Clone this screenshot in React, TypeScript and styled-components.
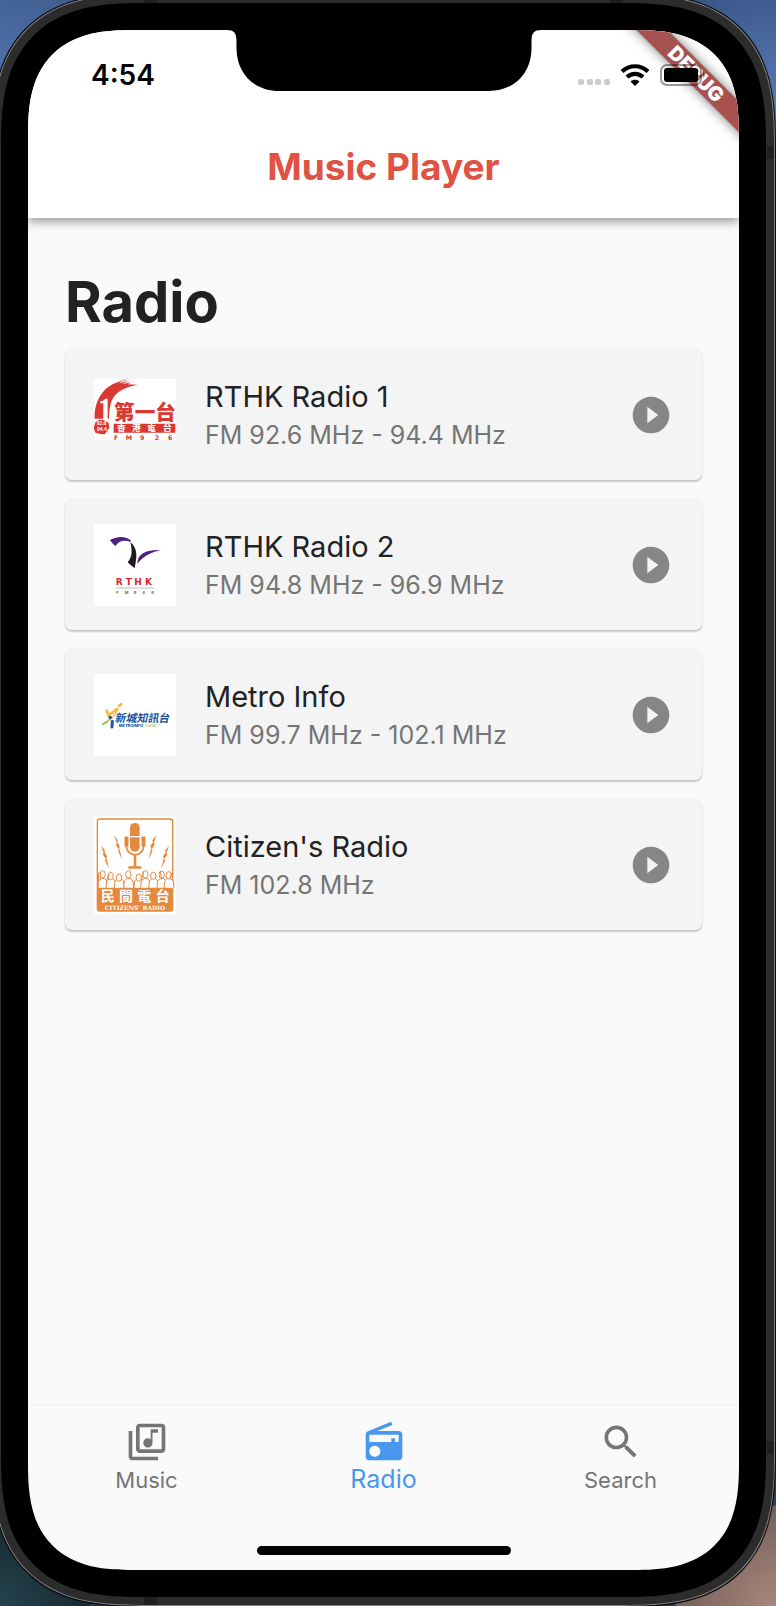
import React, { useState } from "react";
import styled, { createGlobalStyle, css } from "styled-components";

const GlobalStyle = createGlobalStyle`
  *, *::before, *::after { box-sizing: border-box; }
  body {
    margin: 0;
    font-family: Inter, "Noto Sans CJK TC", sans-serif;
    color: #222222;
  }
  button { font: inherit; border: 0; padding: 0; background: none; cursor: pointer; }
`;

const Desktop = styled.div`
  display: flex;
  min-height: 100vh;
  overflow: hidden;
  background:
    radial-gradient(circle at 0 100%, #25434e 0, #17282f 90px, transparent 91px),
    radial-gradient(circle at 100% 100%, #a8877c 0, #75605a 100px, transparent 101px),
    radial-gradient(circle at 0 100px, #5478b4 0, #3f5c8c 130px, transparent 131px),
    radial-gradient(circle at 100% 100px, #5478b4 0, #3a5484 130px, transparent 131px),
    #2b3c58;
`;

const corner = (plain: number, smooth: number) => css`
  border-radius: ${plain}px;
  @supports (corner-shape: superellipse(1.4)) {
    border-radius: ${smooth}px;
    corner-shape: superellipse(1.4);
  }
`;

const Frame = styled.div`
  position: relative;
  flex: 1;
  display: flex;
  margin: -6px 1px 0 -8px;
  padding: 7px;
  border: 1px solid #808080;
  outline: 1px solid #0c0c0c;
  background: #2c2c2c;
  ${corner(118, 150)}
`;

const Band = styled.span<{ $edge: "top" | "bottom" | "right"; $from: "start" | "end" }>`
  position: absolute;
  background: #1f1f1f;
  ${({ $edge, $from }) =>
    $edge === "right"
      ? css`right: 0; width: 7px; height: 13px; ${$from === "start" ? "top" : "bottom"}: 151px;`
      : css`${$edge}: 0; width: 13px; height: 8px; ${$from === "start" ? "left" : "right"}: 151px;`}
`;

const Bezel = styled.div`
  flex: 1;
  display: flex;
  margin: 1px;
  padding: 27px;
  background: #000000;
  ${corner(110, 141)}
`;

const Screen = styled.div`
  position: relative;
  flex: 1;
  display: flex;
  flex-direction: column;
  min-width: 0;
  overflow: hidden;
  background: #fafafa;
  ${corner(86, 106)}
`;

const Notch = styled.svg`
  position: absolute;
  top: -1px;
  left: 50%;
  width: 315px;
  height: 62px;
  transform: translateX(-50%);
  z-index: 2;
`;

const DebugBanner = styled.div`
  position: absolute;
  top: 33px;
  right: -47px;
  width: 180px;
  height: 22px;
  line-height: 22px;
  text-align: center;
  font-size: 20px;
  font-weight: 900;
  color: #ffffff;
  background: rgba(152, 54, 52, 0.86);
  box-shadow: 0 0 12px rgba(0, 0, 0, 0.5);
  transform: rotate(45deg);
  z-index: 1;
`;

const AppBar = styled.header`
  padding-bottom: 4px;
  background: #ffffff;
  box-shadow: 0 4px 9px rgba(0, 0, 0, 0.36);
`;

const StatusBar = styled.div`
  position: relative;
  z-index: 3;
  display: flex;
  align-items: center;
  justify-content: space-between;
  height: 90px;
  padding: 0 34px 0 63px;
`;

const Clock = styled.time`
  font-size: 28px;
  line-height: 32px;
  font-weight: 600;
  color: #000000;
`;

const Signals = styled.div`
  display: flex;
  gap: 10px;
`;

const AppTitle = styled.h1`
  margin: 0;
  text-align: center;
  font-size: 37px;
  line-height: 94px;
  font-weight: 700;
  color: #e05243;
`;

const Content = styled.main`
  flex: 1;
  padding: 52px 37px;
`;

const Heading = styled.h2`
  margin: 0 0 15px;
  font-size: 56px;
  line-height: 64px;
  font-weight: 700;
`;

const StationList = styled.ul`
  display: grid;
  gap: 19px;
  margin: 0;
  padding: 0;
  list-style: none;
`;

const StationCard = styled.li`
  display: flex;
  align-items: center;
  gap: 29px;
  min-height: 131px;
  padding: 0 29px;
  border-radius: 7px;
  background: #f4f4f4;
  box-shadow: 0 2px 2px rgba(0, 0, 0, 0.2), 0 0 2px rgba(0, 0, 0, 0.06);
`;

const LogoSlot = styled.div`
  display: flex;
  flex: none;
  width: 82px;
`;

const StationText = styled.div`
  flex: 1;
  min-width: 0;
  padding-top: 2px;
`;

const StationName = styled.h3`
  margin: 0;
  font-size: 29px;
  line-height: 38px;
  font-weight: 400;
`;

const Frequency = styled.p`
  margin: 0;
  font-size: 25px;
  line-height: 38px;
  color: #757575;
`;

const PlayButton = styled.button`
  display: flex;
  flex: none;
  color: #868686;
`;

const NavBar = styled.nav`
  display: grid;
  grid-template-columns: repeat(3, 1fr);
  padding-top: 14px;
  border-top: 2px solid #f3f3f3;
`;

const NavItem = styled.button<{ $active: boolean }>`
  display: grid;
  grid-template-rows: 44px 32px;
  justify-items: center;
  align-items: start;
  font-size: ${({ $active }) => ($active ? 25 : 22)}px;
  line-height: ${({ $active }) => ($active ? 30 : 32)}px;
  color: ${({ $active }) => ($active ? "#4a97f0" : "#757575")};
`;

const HomeIndicator = styled.div`
  width: 254px;
  height: 9px;
  margin: 50px auto 15px;
  border-radius: 5px;
  background: #000000;
`;

const Icon = ({ path }: { path: string }) => (
  <svg width="44" height="44" viewBox="0 0 24 24" fill="currentColor" aria-hidden="true">
    <path d={path} />
  </svg>
);

const icons = {
  play: "M12 2C6.48 2 2 6.48 2 12s4.48 10 10 10 10-4.48 10-10S17.52 2 12 2zm-2 14.5v-9l6 4.5-6 4.5z",
  music:
    "M20 2H8c-1.1 0-2 .9-2 2v12c0 1.1.9 2 2 2h12c1.1 0 2-.9 2-2V4c0-1.1-.9-2-2-2zm0 14H8V4h12v12zm-7.500-1c1.380 0 2.500-1.120 2.500-2.500V7h3V5h-4v5.510c-.42-.32-.93-.51-1.500-.51-1.380 0-2.500 1.120-2.500 2.500s1.120 2.500 2.500 2.500zM4 6H2v14c0 1.100.9 2 2 2h14v-2H4V6z",
  radio:
    "M3.240 6.150C2.510 6.430 2 7.170 2 8v12c0 1.100.89 2 2 2h16c1.110 0 2-.9 2-2V8c0-1.110-.89-2-2-2H8.300l8.260-3.340L15.880 1 3.240 6.150zM7 20c-1.660 0-3-1.340-3-3s1.340-3 3-3 3 1.340 3 3-1.340 3-3 3zm13-8h-2v-2h-2v2H4V8h16v4z",
  search:
    "M15.500 14h-.79l-.28-.27C15.410 12.590 16 11.110 16 9.500 16 5.910 13.090 3 9.500 3S3 5.910 3 9.500 5.910 16 9.500 16c1.610 0 3.090-.59 4.230-1.570l.27.28v.79l5 4.990L20.490 19l-4.990-5zm-6 0C7.010 14 5 11.990 5 9.500S7.010 5 9.500 5 14 7.010 14 9.500 11.990 14 9.500 14z",
};

const cjk = '"Noto Sans CJK TC", sans-serif';

const RadioOneLogo = () => (
  <svg width="82" height="72" viewBox="29 25 246 216" role="img" aria-label="RTHK Radio 1">
    <path fill="#fff" d="M29 25h246v183H29z" />
    <g fill="#d93833">
      <path d="M31 144C29 98 51 54 92 38l20-6-8 7 22-7-12 8 24-4-8 5 30 1c-38 8-66 20-78 48-5 14-8 31-8 54z" />
      <path opacity=".3" d="M92 36l22-10 20 0-12 5 20-2-14 7 18-1-12 5-34 0z" />
      <path d="M34 153l12-6 14 2 13 8 2 14-8 12-6 8-14-1-14-4-5-15z" />
      <path d="M88 159h185v27H88z" />
      <text x="89" y="147" fontSize="62" fontWeight="900" fontFamily={cjk}>第一台</text>
      <text x="89 124 167 211 251" y="207" fontSize="19" fontWeight="700" fontFamily="DejaVu Sans, sans-serif">FM926</text>
    </g>
    <g fill="#fff">
      <path d="M48 92c8-1 12-4 14-8h8v61h-13V98h-9z" />
      <text x="98 143 189 236" y="182" fontSize="26" fontWeight="700" fontFamily={cjk}>香港電台</text>
      <text x="37" y="164" fontSize="13" fontWeight="700">92.6</text>
      <text x="38" y="181" fontSize="13" fontWeight="700">94.4</text>
    </g>
  </svg>
);

const RadioTwoLogo = () => (
  <svg width="82" height="82" viewBox="29 24 246 246" role="img" aria-label="RTHK Radio 2">
    <path fill="#fff" d="M29 24h246v246H29z" />
    <path fill="#4c1f80" d="M77 72c19-10 42-15 62 1v5c-20-8-35-4-46 12-6-5-10-9-16-18z" />
    <path fill="#4c1f80" d="M159 143c0-29 25-42 70-41-28 7-51 17-70 41z" />
    <path fill="#211a20" d="M138 79c15 11 22 31 16 60l-3 18c-7-6-13-10-21-18 12-13 15-32 8-60z" />
    <text x="94 124 150 182" y="207" fontSize="27" fontWeight="700" fill="#d9262c" fontFamily="DejaVu Sans, sans-serif">RTHK</text>
    <path stroke="#999" strokeWidth="2" d="M96 216h113" />
    <text x="96 121 148 174 201" y="235" fontSize="12" fontWeight="600" fill="#555">FM948</text>
  </svg>
);

const MetroLogo = () => (
  <svg width="82" height="82" viewBox="29 24 246 246" role="img" aria-label="Metro Info">
    <path fill="#fff" d="M29 24h246v246H29z" />
    <g fill="none" strokeLinecap="round">
      <path stroke="#f0bd50" strokeWidth="9" d="M67 134l8 18M80 143l19-14M105 119l5-4" />
      <path stroke="#7fb955" strokeWidth="5" d="M55 175c8-3 16-9 23-17" />
      <path stroke="#f0bd50" strokeWidth="4" d="M68 166c16-8 26-20 32-34" />
      <path stroke="#20549c" strokeWidth="9" d="M84 166l-1 17" />
    </g>
    <circle cx="78" cy="154" r="5" fill="#20549c" />
    <text transform="skewX(-12)" x="126" y="168" fontSize="33" fontWeight="700" fill="#20549c" fontFamily={cjk}>新城知訊台</text>
    <text x="103" y="184" fontSize="12" fontWeight="800" fontStyle="italic" fill="#20549c">METROINFO</text>
    <text x="183" y="184" fontSize="12" fontStyle="italic" fill="#8bc16a">FM99.7</text>
  </svg>
);

const people = [
  [55, 204], [79, 209], [104, 214], [132, 204], [163, 214], [183, 204], [207, 208], [232, 205], [253, 207],
];

const CitizenLogo = () => (
  <svg width="82" height="98" viewBox="29 29 246 294" role="img" aria-label="Citizen's Radio">
    <path fill="#fff" d="M29 29h246v294H29z" />
    <rect x="39" y="38" width="226" height="276" rx="7" fill="none" stroke="#e48a3f" strokeWidth="4" />
    <g fill="#e48a3f">
      <rect x="137" y="50" width="29" height="86" rx="14" />
      <path d="M132 180h39v7h-39zM148 146h8v36h-8z" />
      <path d="M89 86l12 17-3 2 9 17-3 2 10 37-13-28 3-2-10-17 4-2zM216 86l-13 17 4 2-10 17 4 2-9 37 13-28-4-2 11-17-4-2zM51 118l12 16-3 2 9 15-3 2 8 35-13-27 4-2-10-15 3-2zM254 118l-13 16 4 2-10 15 4 2-9 35 13-27-4-2 11-15-4-2z" />
      <path d="M39 246h226v61q0 7-7 7H46q-7 0-7-7z" />
    </g>
    <path fill="none" stroke="#e48a3f" strokeWidth="5" d="M126 92v25c0 38 52 38 52 0V92M123 93h7v25h-7zM174 93h7v25h-7z" />
    <path stroke="#fff" strokeWidth="4" d="M135 91h33" />
    <g fill="#fff" stroke="#e48a3f" strokeWidth="3">
      {people.map(([x, y]) => (
        <g key={x}>
          <path d={`M${x - 14} 245l2-21 9-8h8l9 8 2 21`} />
          <ellipse cx={x} cy={y} rx="8" ry="11" />
        </g>
      ))}
      <path d="M41 244l2-45 6 3-3 22M262 199l-5 20M66 224l8-20M228 196l4 24M172 220l6-24" />
    </g>
    <path fill="#e48a3f" d="M39 244h226v5H39z" />
    <g fill="#fff">
      <text x="49 104 159 214" y="285" fontSize="42" fontWeight="700" fontFamily={cjk}>民間電台</text>
      <text x="152" y="310" textAnchor="middle" fontSize="18" fontWeight="700" fontFamily="DejaVu Serif, serif">CITIZENS’ RADIO</text>
    </g>
  </svg>
);

const stations = [
  { name: "RTHK Radio 1", frequency: "FM 92.6 MHz - 94.4 MHz", Logo: RadioOneLogo },
  { name: "RTHK Radio 2", frequency: "FM 94.8 MHz - 96.9 MHz", Logo: RadioTwoLogo },
  { name: "Metro Info", frequency: "FM 99.7 MHz - 102.1 MHz", Logo: MetroLogo },
  { name: "Citizen's Radio", frequency: "FM 102.8 MHz", Logo: CitizenLogo },
];

const tabs = [
  { label: "Music", path: icons.music },
  { label: "Radio", path: icons.radio },
  { label: "Search", path: icons.search },
];

export default function App() {
  const [tab, setTab] = useState("Radio");

  return (
    <Desktop>
      <GlobalStyle />
      <Frame>
        <Band $edge="top" $from="start" />
        <Band $edge="top" $from="end" />
        <Band $edge="bottom" $from="start" />
        <Band $edge="right" $from="start" />
        <Band $edge="right" $from="end" />
        <Bezel>
          <Screen>
            <Notch viewBox="0 0 315 62" aria-hidden="true">
              <path d="M0 0V1C8 1 10 4 10 13V19C10 44 27 62 53 62H262C288 62 305 44 305 19V13C305 4 307 1 315 1V0Z" />
            </Notch>
            <DebugBanner>DEBUG</DebugBanner>
            <AppBar>
              <StatusBar>
                <Clock>4:54</Clock>
                <Signals>
                  <svg width="32" height="22" viewBox="0 0 32 22" fill="#cccccc" aria-hidden="true">
                    <rect x="0" y="15" width="6" height="6" rx="2" />
                    <rect x="9" y="15" width="6" height="6" rx="2" />
                    <rect x="17" y="15" width="6" height="6" rx="2" />
                    <rect x="26" y="15" width="6" height="6" rx="2" />
                  </svg>
                  <svg width="30" height="22" viewBox="0 0 30 22" aria-hidden="true">
                    <g fill="none" stroke="#000" strokeWidth="4.200">
                      <path d="M2 7.500C9.500.5 20.500.5 28 7.500" />
                      <path d="M7 13C11.500 8.700 18.500 8.700 23 13" />
                    </g>
                    <path d="M15 22l-4.500-4.600c2.600-2.200 6.400-2.200 9 0z" />
                  </svg>
                  <svg width="45" height="22" viewBox="0 0 45 22" aria-hidden="true">
                    <rect x="1" y="1" width="40" height="20" rx="6" fill="none" stroke="#000" strokeOpacity=".4" strokeWidth="2" />
                    <rect x="4" y="4" width="34" height="14" rx="3" />
                    <path d="M43 8c2.500 1 2.500 5 0 6z" fillOpacity=".4" />
                  </svg>
                </Signals>
              </StatusBar>
              <AppTitle>Music Player</AppTitle>
            </AppBar>
            <Content>
              <Heading>Radio</Heading>
              <StationList>
                {stations.map(({ name, frequency, Logo }) => (
                  <StationCard key={name}>
                    <LogoSlot>
                      <Logo />
                    </LogoSlot>
                    <StationText>
                      <StationName>{name}</StationName>
                      <Frequency>{frequency}</Frequency>
                    </StationText>
                    <PlayButton aria-label={`Play ${name}`}>
                      <Icon path={icons.play} />
                    </PlayButton>
                  </StationCard>
                ))}
              </StationList>
            </Content>
            <NavBar>
              {tabs.map(({ label, path }) => (
                <NavItem
                  key={label}
                  $active={label === tab}
                  aria-current={label === tab ? "page" : undefined}
                  onClick={() => setTab(label)}
                >
                  <Icon path={path} />
                  {label}
                </NavItem>
              ))}
            </NavBar>
            <HomeIndicator />
          </Screen>
        </Bezel>
      </Frame>
    </Desktop>
  );
}
